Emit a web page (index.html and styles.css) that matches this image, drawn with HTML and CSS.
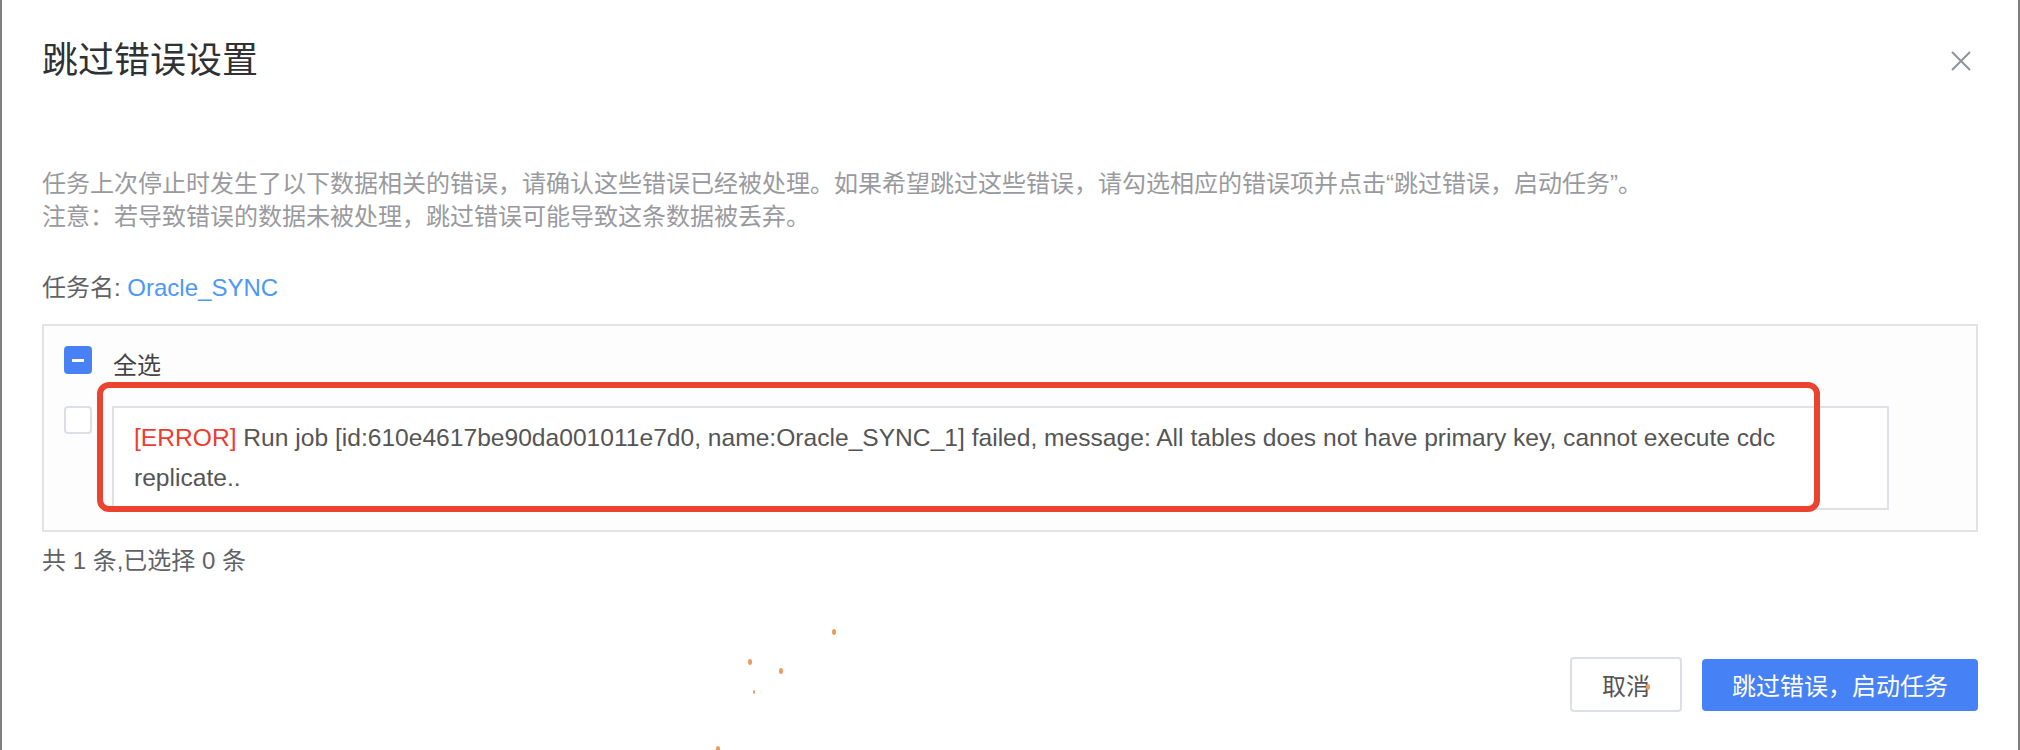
FILE: index.html
```html
<!DOCTYPE html>
<html lang="zh-CN">
<head>
  <meta charset="UTF-8">
  <meta name="viewport" content="width=device-width, initial-scale=1.0">
  <title>跳过错误设置</title>
  <link rel="stylesheet" href="styles.css">
</head>
<body>

  <div class="dialog">
    <div class="dialog-header">
      <span class="dialog-title">跳过错误设置</span>
      <button class="close-btn" aria-label="close">
        <svg width="20" height="20" viewBox="0 0 20 20">
          <path d="M1 1 L19 19 M19 1 L1 19" stroke="#909399" stroke-width="2" fill="none"/>
        </svg>
      </button>
    </div>

    <div class="dialog-body">
      <p class="tips">
        任务上次停止时发生了以下数据相关的错误，请确认这些错误已经被处理。如果希望跳过这些错误，请勾选相应的错误项并点击“跳过错误，启动任务”。<br>
        注意：若导致错误的数据未被处理，跳过错误可能导致这条数据被丢弃。
      </p>

      <div class="task-name">任务名: <span class="task-link">Oracle_SYNC</span></div>

      <div class="error-list">
        <div class="row row-all">
          <span class="checkbox indeterminate"></span>
          <span class="label">全选</span>
        </div>
        <div class="row">
          <span class="checkbox"></span>
          <div class="error-item"><span class="error-tag">[ERROR]</span> Run job [id:610e4617be90da001011e7d0, name:Oracle_SYNC_1] failed, message: All tables does not have primary key, cannot execute cdc replicate..</div>
        </div>
        <div class="highlight"></div>
      </div>

      <div class="count">共 1 条,已选择 0 条</div>
    </div>

    <div class="dialog-footer">
      <button class="btn btn-default">取消</button>
      <button class="btn btn-primary">跳过错误，启动任务</button>
    </div>

    <span class="speck" style="left: 830px; top: 629px;"></span>
    <span class="speck" style="left: 746px; top: 659px;"></span>
    <span class="speck" style="left: 777px; top: 668px;"></span>
    <span class="speck small" style="left: 751px; top: 690px;"></span>
    <span class="speck" style="left: 714px; top: 746px;"></span>
    <span class="speck" style="left: 1644px; top: 684px;"></span>
  </div>

</body>
</html>
```

FILE: styles.css
```css
body {
  margin: 0;
  padding: 0;
  background-color: #7f7f7f;
  font-family: "Liberation Sans", "Noto Sans CJK SC", sans-serif;
  color: #606266;
}

.dialog {
  position: relative;
  box-sizing: border-box;
  width: 2016px;
  height: 750px;
  margin-left: 2px;
  padding: 0 40px;
  background-color: #fff;
  overflow: hidden;
}

.dialog-header {
  display: flex;
  justify-content: space-between;
  align-items: center;
  padding-top: 36px;
}

.dialog-title {
  font-size: 36px;
  line-height: 50px;
  color: #303133;
}

.close-btn {
  display: flex;
  padding: 0;
  margin-right: 7px;
  border: none;
  background: none;
  cursor: pointer;
}

.tips {
  margin: 81px 0 0;
  font-size: 24px;
  line-height: 33px;
  color: #999a9e;
}

.task-name {
  margin-top: 38px;
  font-size: 24px;
  line-height: 33px;
  color: #606266;
}

.task-link {
  color: #4b98f6;
}

.error-list {
  position: relative;
  margin-top: 20px;
  padding: 20px;
  border: 2px solid #e2e2e8;
  background-color: #fdfdfe;
}

.row {
  display: flex;
  align-items: flex-start;
  gap: 20px;
}

.row-all {
  margin-bottom: 20px;
}

.checkbox {
  position: relative;
  flex: none;
  box-sizing: border-box;
  width: 28px;
  height: 28px;
  border: 2px solid #dcdfe6;
  border-radius: 4px;
  background-color: #fff;
}

.checkbox.indeterminate {
  border-color: #4781f5;
  background-color: #4781f5;
}

.checkbox.indeterminate::after {
  content: "";
  position: absolute;
  left: 6px;
  top: 11px;
  width: 12px;
  height: 3px;
  background-color: #fff;
}

.label {
  font-size: 24px;
  line-height: 40px;
  color: #444;
  margin-left: 1px;
}

.error-item {
  box-sizing: border-box;
  width: 1777px;
  padding: 10px 20px;
  border: 2px solid #e0e0e6;
  background-color: #fff;
  font-size: 24.6px;
  line-height: 40px;
  color: #555;
}

.error-tag {
  color: #ef3b2f;
}

.highlight {
  position: absolute;
  left: 53px;
  top: 56px;
  box-sizing: border-box;
  width: 1723px;
  height: 130px;
  border: 6px solid #ea4330;
  border-radius: 12px;
}

.count {
  margin-top: 9px;
  font-size: 24px;
  line-height: 40px;
  color: #606266;
}

.dialog-footer {
  display: flex;
  justify-content: flex-end;
  align-items: center;
  gap: 20px;
  margin-top: 76px;
}

.btn {
  box-sizing: border-box;
  font-family: "Liberation Sans", "Noto Sans CJK SC", sans-serif;
  font-size: 24px;
  border-radius: 4px;
  cursor: pointer;
}

.btn-default {
  height: 55px;
  padding: 0 30px;
  border: 2px solid #dcdfe6;
  background-color: #fff;
  color: #555;
}

.btn-primary {
  height: 52px;
  padding: 0 30px;
  border: none;
  background-color: #4781f6;
  color: #fff;
}

.speck {
  position: absolute;
  width: 4px;
  height: 6px;
  border-radius: 50%;
  background-color: #ee9a5c;
}

.speck.small {
  width: 2px;
  height: 4px;
}
```
